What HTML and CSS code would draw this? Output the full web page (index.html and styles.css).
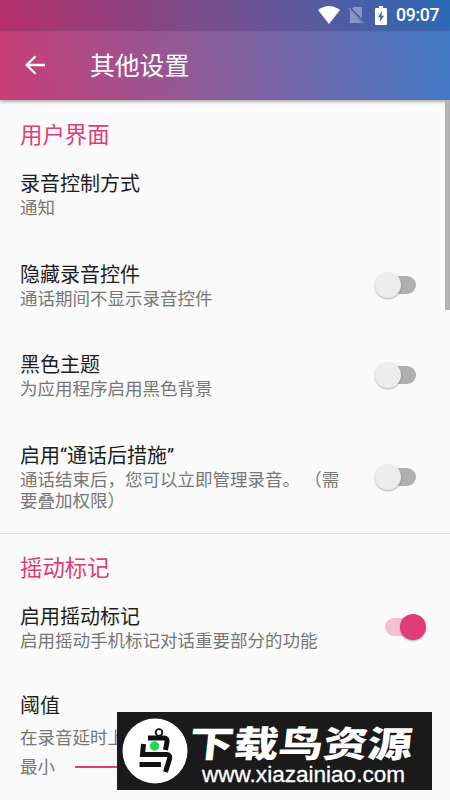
FILE: index.html
```
<!DOCTYPE html>
<html lang="zh-CN">
<head>
<meta charset="utf-8">
<title>其他设置</title>
<link rel="stylesheet" href="styles.css">
</head>
<body>
<div class="screen">
  <header class="top">
    <div class="status">
      <svg class="wifi" viewBox="0 0 22 18"><path d="M0 4Q11-4 22 4L11 18Z" fill="#fff"/></svg>
      <svg class="sim" viewBox="0 0 16 18"><path d="M5.500 1H14v11.500L4 2.500zM2 4.500L13.500 17H2z" fill="#fff" opacity=".35"/><path d="M.5 2L15 17" stroke="#fff" stroke-width="1.300" opacity=".3"/></svg>
      <svg class="battery" viewBox="0 0 12 19"><path fill-rule="evenodd" d="M4 0h4v2h3q1 0 1 1v15q0 1-1 1H1q-1 0-1-1V3q0-1 1-1h3zM7 5L3 11.200h2.500L4.800 16 9 9.700H6.500z" fill="#fff"/></svg>
      <span class="clock">09:07</span>
    </div>
    <div class="bar">
      <svg class="back" viewBox="0 0 20 20"><path d="M20 10H2M10.500 1.200L1.700 10l8.800 8.800" fill="none" stroke="#fff" stroke-width="2.300"/></svg>
      <h1>其他设置</h1>
    </div>
  </header>
  <main>
    <section class="group">
      <h2>用户界面</h2>
      <div class="row"><div class="text"><h3>录音控制方式</h3><p>通知</p></div></div>
      <div class="row"><div class="text"><h3>隐藏录音控件</h3><p>通话期间不显示录音控件</p></div><i class="switch"></i></div>
      <div class="row"><div class="text"><h3>黑色主题</h3><p>为应用程序启用黑色背景</p></div><i class="switch"></i></div>
      <div class="row tall"><div class="text"><h3>启用“通话后措施”</h3><p>通话结束后，您可以立即管理录音。 （需<br>要叠加权限）</p></div><i class="switch"></i></div>
    </section>
    <section class="group shake">
      <h2>摇动标记</h2>
      <div class="row"><div class="text"><h3>启用摇动标记</h3><p>启用摇动手机标记对话重要部分的功能</p></div><i class="switch on"></i></div>
      <div class="threshold">
        <h3>阈值</h3>
        <p class="hint">在录音延时上</p>
        <div class="slider"><p>最小</p><span class="track"></span></div>
      </div>
    </section>
  </main>
  <div class="scrollbar"></div>
  <div class="watermark">
    <svg class="logo" viewBox="0 0 66 66"><circle cx="33" cy="33" r="32.500" fill="#fff"/><circle cx="37" cy="14.500" r="3.300" fill="none" stroke="#111" stroke-width="1.800"/><path d="M26 20H42Q45.500 20 45 24L43.500 32M21.500 26L20.500 36.500H45Q48.500 37 47.500 41L43.500 54M17.500 46.500H39" fill="none" stroke="#111" stroke-width="5"/><circle cx="32.500" cy="28" r="4.700" fill="#20d65c"/></svg>
    <svg class="brand" viewBox="0 0 244 78"><text class="name" x="0" y="0" transform="translate(0 44.500) skewX(-6) scale(1.240 1)" textLength="180" lengthAdjust="spacingAndGlyphs">下载鸟资源</text><text class="url" x="14" y="70" textLength="203" lengthAdjust="spacingAndGlyphs">www.xiazainiao.com</text></svg>
  </div>
</div>
</body>
</html>
```
FILE: styles.css
```
* { box-sizing: border-box; }
body, h1, h2, h3, p { margin: 0; font-weight: 400; }
body { font-family: Roboto, "Noto Sans CJK SC", sans-serif; background: #fafafa; }
.screen { position: relative; width: 450px; height: 800px; overflow: hidden; background: #fafafa; }
.top { height: 100px; color: #fff; background: linear-gradient(80deg, #ca3e76, #855f9d 50%, #3f7bc7); box-shadow: 0 1px 4px rgba(0,0,0,.45); }
.status { height: 30px; display: flex; align-items: center; justify-content: flex-end; padding-right: 11px; background: linear-gradient(80deg, #b63068, #734f8f 50%, #2b6ab5); box-shadow: 0 0 2px rgba(40,20,70,.6); }
.wifi { width: 22px; height: 18px; margin-right: 8px; }
.sim { width: 16px; height: 18px; margin-right: 11px; }
.battery { width: 12px; height: 19px; margin-right: 9px; }
.clock { font-size: 17.700px; line-height: 30px; width: 43px; font-weight: 500; white-space: nowrap; letter-spacing: -.3px; }
.bar { height: 70px; display: flex; align-items: center; padding-left: 25px; }
.back { width: 20px; height: 20px; margin-right: 45px; }
h1 { font-size: 24.800px; line-height: 34px; padding-top: 4px; }
h2 { height: 70px; padding-left: 20px; font-size: 22.400px; line-height: 70px; color: #e03c77; }
.group { border-bottom: 1px solid #dcdcdc; }
.shake { border: 0; }
.shake h2 { height: 69px; line-height: 68px; }
.row { height: 90.500px; display: flex; padding: 0 34px 0 20px; justify-content: space-between; }
.tall { height: 91px; }
.text { white-space: nowrap; }
h3 { font-size: 20px; line-height: 28px; color: #1e1e1e; }
p { font-size: 17.500px; line-height: 21px; color: #777; }
.switch { position: relative; width: 37px; height: 18px; margin-top: 15px; border-radius: 9px; background: #afafaf; }
.tall .switch { margin-top: 26px; }
.switch::before { content: ""; position: absolute; left: -4px; top: -4px; width: 26px; height: 26px; border-radius: 50%; background: #ededed; box-shadow: 0 1px 2px rgba(0,0,0,.3); }
.switch.on { background: #f3bfd2; margin-right: -7px; width: 38px; }
.switch.on::before { left: 15px; background: #e03c77; }
.threshold { padding: 0 20px; margin-top: -1.500px; }
.hint { margin-top: 8px; }
.slider { display: flex; align-items: center; margin-top: 8px; }
.slider p { width: 55px; }
.track { width: 190px; height: 2px; background: #e03c77; }
.scrollbar { position: absolute; right: 0; top: 100px; width: 5px; height: 210px; background: #b3b3b3; }
.watermark { position: absolute; left: 117px; top: 712px; width: 315px; height: 78px; display: flex; align-items: center; background: #1a1a1a; }
.logo { width: 66px; height: 66px; margin-left: 5px; flex: none; }
.brand { width: 244px; height: 78px; flex: none; overflow: visible; }
.brand text { fill: #fff; }
.name { font: 900 36px "Noto Sans CJK SC", sans-serif; }
.url { font: 22px "Liberation Sans", sans-serif; stroke: #fff; stroke-width: .3px; }
```
